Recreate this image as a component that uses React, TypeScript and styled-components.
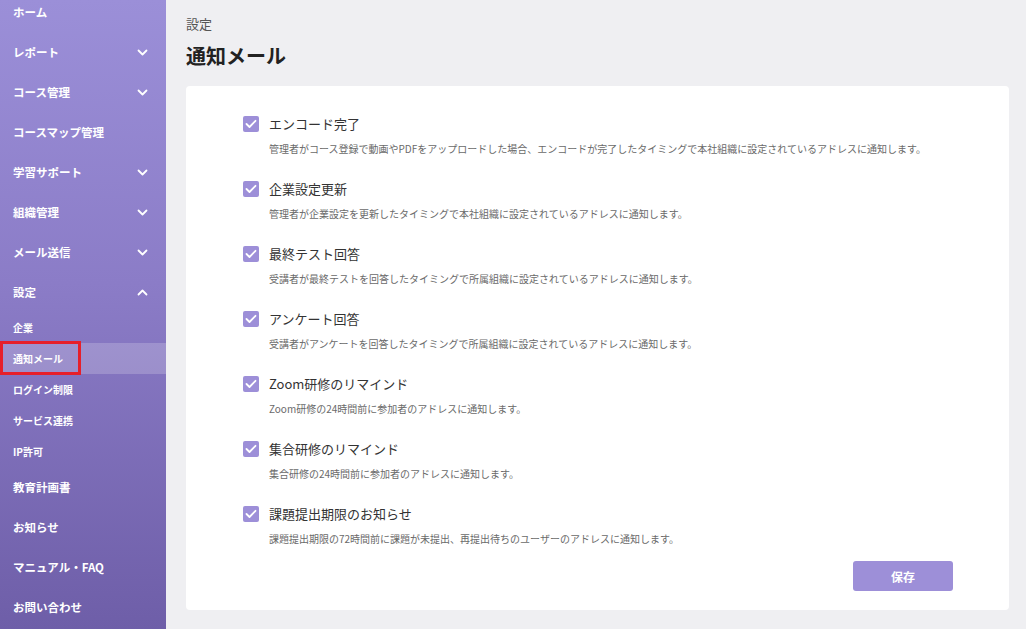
import React from "react";
import styled, { createGlobalStyle } from "styled-components";

const GlobalStyle = createGlobalStyle`
    html, body {
        margin: 0;
        padding: 0;
        height: 100%;
        overflow: hidden;
    }
    body {
        font-family: "Noto Sans CJK JP", "Noto Sans", sans-serif;
        background: #efeff2;
    }
`;

const Layout = styled.div`
    display: flex;
    width: 1026px;
    height: 629px;
    overflow: hidden;
`;

const Sidebar = styled.nav`
    width: 166px;
    flex-shrink: 0;
    height: 100%;
    background: linear-gradient(180deg, #9b8fd8 0%, #8b7cc7 45%, #6e5ea8 100%);
    overflow: hidden;
`;

const NavList = styled.ul`
    list-style: none;
    margin: -8px 0 0;
    padding: 0;
`;

const NavItem = styled.li<{ $sub?: boolean; $active?: boolean }>`
    position: relative;
    display: flex;
    align-items: center;
    justify-content: space-between;
    height: ${props => (props.$sub ? "31px" : "40px")};
    padding: 0 18px 0 13px;
    color: #fff;
    font-size: ${props => (props.$sub ? "10px" : "11.5px")};
    font-weight: 700;
    background: ${props => (props.$active ? "rgba(255, 255, 255, 0.2)" : "transparent")};
    white-space: nowrap;
`;

const Highlight = styled.span`
    position: absolute;
    left: 0;
    top: -2px;
    width: 81px;
    height: 34px;
    box-sizing: border-box;
    border: 3px solid #e61f2a;
    pointer-events: none;
`;

const Main = styled.main`
    flex: 1;
    padding: 14px 17px 0 20px;
    min-width: 0;
`;

const Breadcrumb = styled.div`
    font-size: 13px;
    line-height: 20px;
    color: #555;
`;

const Title = styled.h1`
    margin: 7px 0 15px;
    font-size: 20px;
    line-height: 30px;
    font-weight: 700;
    color: #222;
`;

const Card = styled.section`
    background: #fff;
    border-radius: 4px;
    padding: 27px 56px 19px 57px;
    display: flex;
    flex-direction: column;
`;

const OptionList = styled.div`
    display: flex;
    flex-direction: column;
    gap: 21px;
`;

const Option = styled.div`
    display: flex;
    flex-direction: column;
    gap: 8px;
`;

const OptionHead = styled.label`
    display: flex;
    align-items: center;
    gap: 10px;
    height: 20px;
    font-size: 13px;
    color: #333;
`;

const Box = styled.span`
    width: 16px;
    height: 16px;
    margin-top: 1px;
    border-radius: 2px;
    background: #9d8fd8;
    display: flex;
    align-items: center;
    justify-content: center;
    flex-shrink: 0;
`;

const Desc = styled.p`
    margin: 0 0 0 26px;
    font-size: 10px;
    line-height: 16px;
    color: #6a6a6a;
    white-space: nowrap;
`;

const Footer = styled.div`
    display: flex;
    justify-content: flex-end;
    margin-top: 14px;
`;

const SaveButton = styled.button`
    width: 100px;
    height: 30px;
    border: 0;
    border-radius: 3px;
    background: #9d8fd8;
    color: #fff;
    font-family: inherit;
    font-size: 12px;
    font-weight: 700;
`;

function Chevron({ up }: { up?: boolean }) {
    return (
        <svg width="11" height="7" viewBox="0 0 11 7" fill="none">
            <polyline
                points={up ? "1.5,5.5 5.5,1.5 9.5,5.5" : "1.5,1.5 5.5,5.5 9.5,1.5"}
                stroke="#fff"
                strokeWidth="1.8"
                strokeLinecap="round"
                strokeLinejoin="round"
            />
        </svg>
    );
}

function Check() {
    return (
        <svg width="12" height="10" viewBox="0 0 12 10" fill="none">
            <polyline points="1.5,5 4.5,8 10.5,1.8" stroke="#fff" strokeWidth="1.8" strokeLinecap="round" strokeLinejoin="round" />
        </svg>
    );
}

interface INav {
    label: string;
    chevron?: "up" | "down";
    sub?: boolean;
    active?: boolean;
}

const navItems: INav[] = [
    { label: "ホーム" },
    { label: "レポート", chevron: "down" },
    { label: "コース管理", chevron: "down" },
    { label: "コースマップ管理" },
    { label: "学習サポート", chevron: "down" },
    { label: "組織管理", chevron: "down" },
    { label: "メール送信", chevron: "down" },
    { label: "設定", chevron: "up" },
    { label: "企業", sub: true },
    { label: "通知メール", sub: true, active: true },
    { label: "ログイン制限", sub: true },
    { label: "サービス連携", sub: true },
    { label: "IP許可", sub: true },
    { label: "教育計画書" },
    { label: "お知らせ" },
    { label: "マニュアル・FAQ" },
    { label: "お問い合わせ" },
];

const options = [
    {
        title: "エンコード完了",
        desc: "管理者がコース登録で動画やPDFをアップロードした場合、エンコードが完了したタイミングで本社組織に設定されているアドレスに通知します。",
    },
    { title: "企業設定更新", desc: "管理者が企業設定を更新したタイミングで本社組織に設定されているアドレスに通知します。" },
    { title: "最終テスト回答", desc: "受講者が最終テストを回答したタイミングで所属組織に設定されているアドレスに通知します。" },
    { title: "アンケート回答", desc: "受講者がアンケートを回答したタイミングで所属組織に設定されているアドレスに通知します。" },
    { title: "Zoom研修のリマインド", desc: "Zoom研修の24時間前に参加者のアドレスに通知します。" },
    { title: "集合研修のリマインド", desc: "集合研修の24時間前に参加者のアドレスに通知します。" },
    { title: "課題提出期限のお知らせ", desc: "課題提出期限の72時間前に課題が未提出、再提出待ちのユーザーのアドレスに通知します。" },
];

function App() {
    return (
        <>
            <GlobalStyle />
            <Layout>
                <Sidebar>
                    <NavList>
                        {navItems.map(item => (
                            <NavItem key={item.label} $sub={item.sub} $active={item.active}>
                                <span>{item.label}</span>
                                {item.chevron && <Chevron up={item.chevron === "up"} />}
                                {item.active && <Highlight />}
                            </NavItem>
                        ))}
                    </NavList>
                </Sidebar>

                <Main>
                    <Breadcrumb>設定</Breadcrumb>
                    <Title>通知メール</Title>

                    <Card>
                        <OptionList>
                            {options.map(opt => (
                                <Option key={opt.title}>
                                    <OptionHead>
                                        <Box>
                                            <Check />
                                        </Box>
                                        {opt.title}
                                    </OptionHead>
                                    <Desc>{opt.desc}</Desc>
                                </Option>
                            ))}
                        </OptionList>

                        <Footer>
                            <SaveButton>保存</SaveButton>
                        </Footer>
                    </Card>
                </Main>
            </Layout>
        </>
    );
}

export default App;
